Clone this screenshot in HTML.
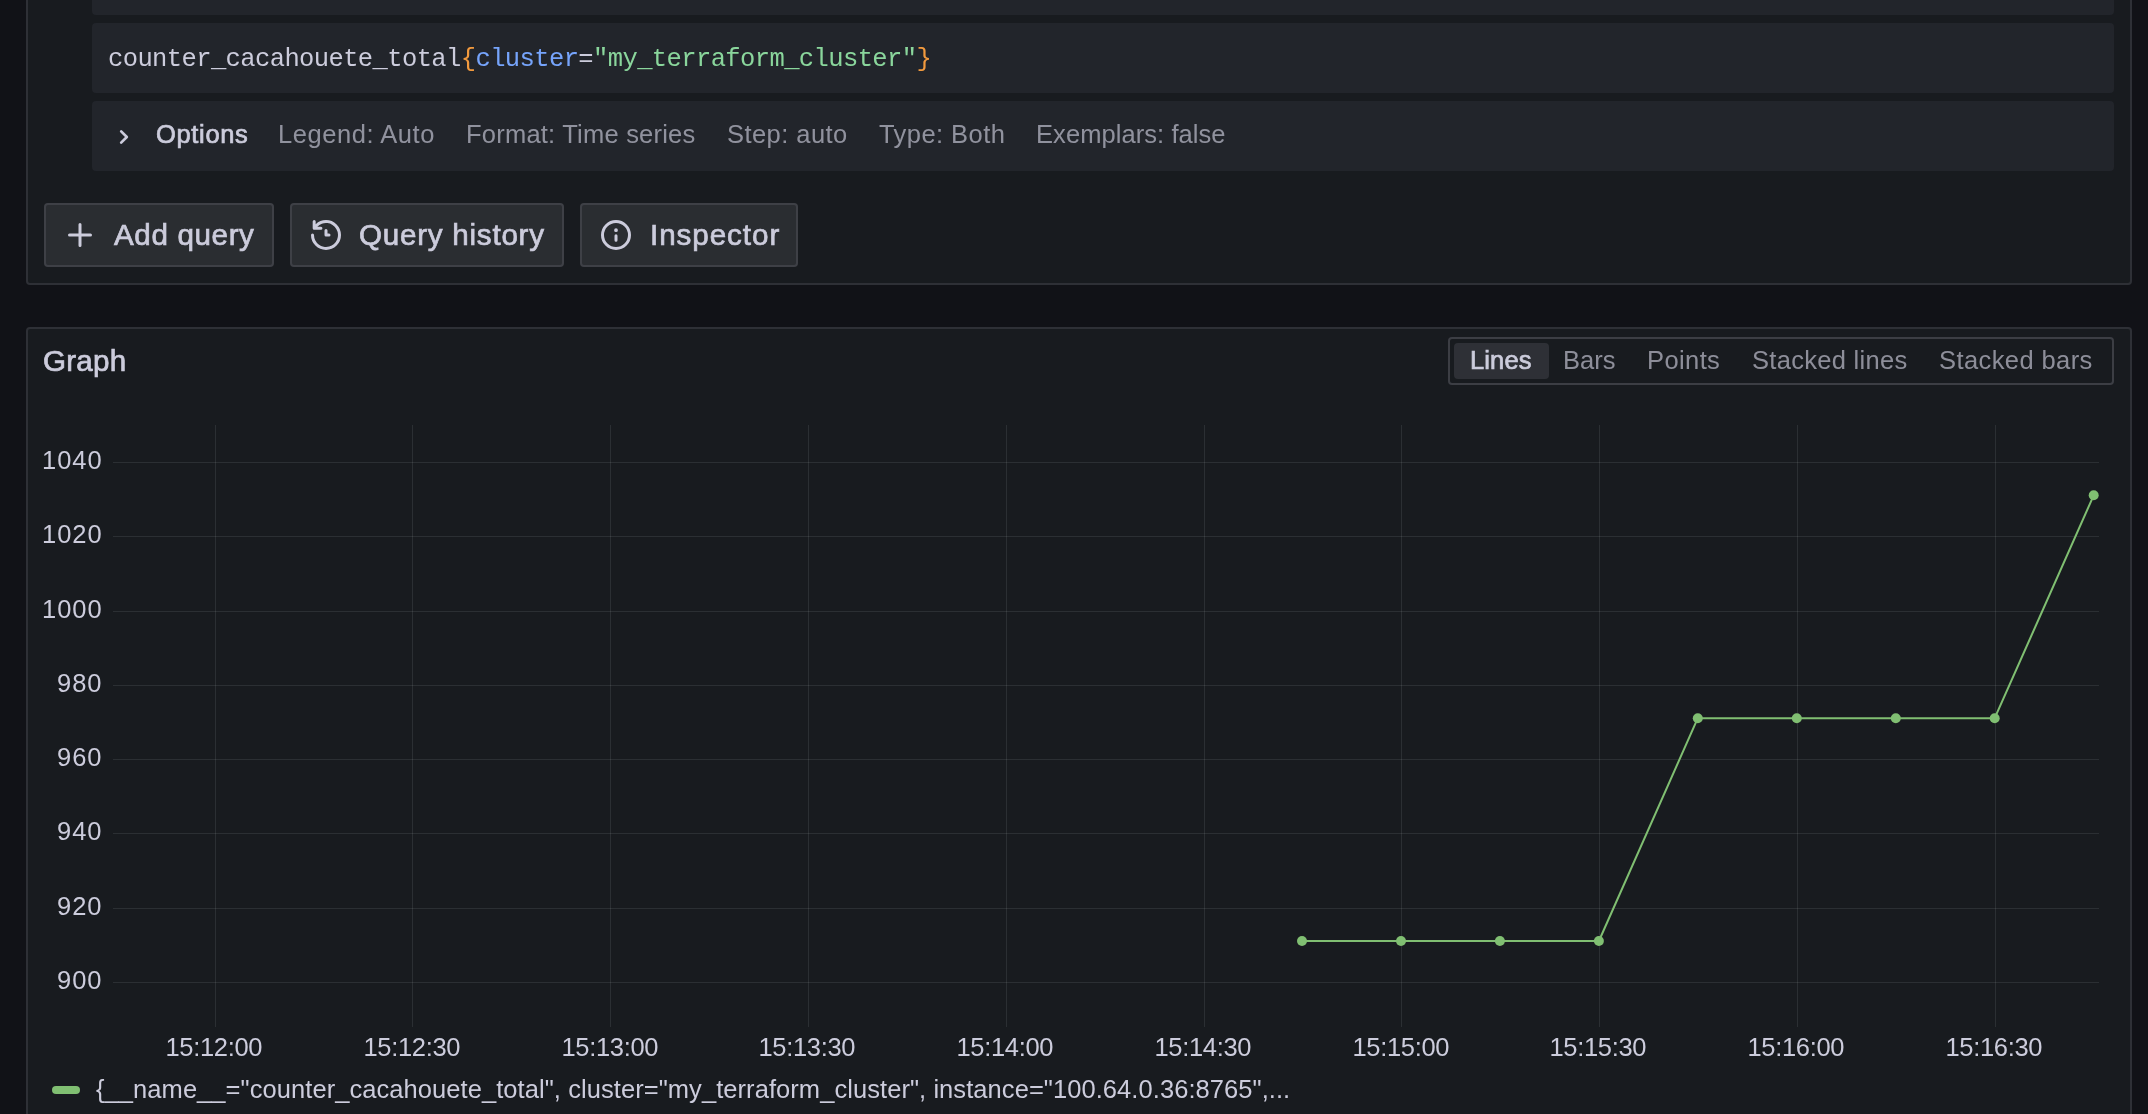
<!DOCTYPE html>
<html><head><meta charset="utf-8">
<style>
html,body{margin:0;padding:0;}
body{width:2148px;height:1114px;overflow:hidden;background:#111217;position:relative;font-family:"Liberation Sans",sans-serif;color:#ccccdc;}
.abs{position:absolute;}
.t{position:absolute;white-space:nowrap;will-change:transform;}
.panel{position:absolute;background:#181b1f;border:2px solid rgba(204,204,220,0.12);border-radius:4px;box-sizing:border-box;}
.box{position:absolute;background:#22252b;border-radius:4px;}
.btn{position:absolute;top:203px;height:64px;box-sizing:border-box;background:rgba(204,204,220,0.10);border:2px solid rgba(204,204,220,0.12);border-radius:4px;}
</style></head>
<body>
<div class="panel" style="left:26px;top:-40px;width:2106px;height:325px;"></div>
<div class="box" style="left:92px;top:-20px;width:2022px;height:35px;"></div>
<div class="box" style="left:92px;top:23px;width:2022px;height:70px;"></div>
<div id="code" class="t" style="left:108.10px;top:46.59px;font-size:25.50px;line-height:25.50px;letter-spacing:-0.604px;color:#ccccdc;font-weight:normal;font-family:'Liberation Mono',monospace;">counter_cacahouete_total<span style="color:#f29a3e">{</span><span style="color:#76a4fb">cluster</span>=<span style="color:#8ad69c">"my_terraform_cluster"</span><span style="color:#f29a3e">}</span></div>
<div class="box" style="left:92px;top:101px;width:2022px;height:70px;"></div>
<svg class="abs" style="left:108px;top:121px" width="32" height="32" viewBox="0 0 24 24"><path fill="#ccccdc" d="M14.83,11.29,10.590,7.05a1,1,0,0,0-1.42,0,1,1,0,0,0,0,1.41L12.71,12,9.17,15.54a1,1,0,0,0,0,1.41,1,1,0,0,0,.71.29,1,1,0,0,0,.71-.29l4.24-4.24A1,1,0,0,0,14.83,11.29Z"/></svg>
<div id="opt0" class="t" style="left:155.60px;top:122.25px;font-size:25.50px;line-height:25.50px;letter-spacing:0.665px;color:#ccccdc;font-weight:normal;font-family:'Liberation Sans',sans-serif;-webkit-text-stroke:0.7px currentColor;">Options</div>
<div id="opt1" class="t" style="left:278.00px;top:122.25px;font-size:25.50px;line-height:25.50px;letter-spacing:0.548px;color:rgba(204,204,220,0.65);font-weight:normal;font-family:'Liberation Sans',sans-serif;">Legend: Auto</div>
<div id="opt2" class="t" style="left:465.60px;top:122.25px;font-size:25.50px;line-height:25.50px;letter-spacing:0.221px;color:rgba(204,204,220,0.65);font-weight:normal;font-family:'Liberation Sans',sans-serif;">Format: Time series</div>
<div id="opt3" class="t" style="left:726.60px;top:122.25px;font-size:25.50px;line-height:25.50px;letter-spacing:0.439px;color:rgba(204,204,220,0.65);font-weight:normal;font-family:'Liberation Sans',sans-serif;">Step: auto</div>
<div id="opt4" class="t" style="left:879.00px;top:122.25px;font-size:25.50px;line-height:25.50px;letter-spacing:0.444px;color:rgba(204,204,220,0.65);font-weight:normal;font-family:'Liberation Sans',sans-serif;">Type: Both</div>
<div id="opt5" class="t" style="left:1035.60px;top:122.25px;font-size:25.50px;line-height:25.50px;letter-spacing:0.069px;color:rgba(204,204,220,0.65);font-weight:normal;font-family:'Liberation Sans',sans-serif;">Exemplars: false</div>
<div class="btn" style="left:44px;width:230px;"></div>
<svg class="abs" style="left:62px;top:217px" width="36" height="36" viewBox="0 0 24 24"><path fill="#ccccdc" d="M19,11H13V5a1,1,0,0,0-2,0v6H5a1,1,0,0,0,0,2h6v6a1,1,0,0,0,2,0V13h6a1,1,0,0,0,0-2Z"/></svg>
<div id="b1" class="t" style="left:114.00px;top:219.99px;font-size:29.60px;line-height:29.60px;letter-spacing:0.625px;color:#ccccdc;font-weight:normal;font-family:'Liberation Sans',sans-serif;-webkit-text-stroke:0.7px currentColor;">Add query</div>
<div class="btn" style="left:290px;width:274px;"></div>
<svg class="abs" style="left:308px;top:217px" width="36" height="36" viewBox="0 0 24 24"><path fill="#ccccdc" d="M12,2A10,10,0,0,0,5.12,4.77V3a1,1,0,0,0-2,0V7.5a1,1,0,0,0,1,1H8.62a1,1,0,0,0,0-2H6.22A8,8,0,1,1,4,12a1,1,0,0,0-2,0A10,10,0,1,0,12,2Zm0,6a1,1,0,0,0-1,1v3a1,1,0,0,0,1,1h2a1,1,0,0,0,0-2H13V9A1,1,0,0,0,12,8Z"/></svg>
<div id="b2" class="t" style="left:359.40px;top:219.99px;font-size:29.60px;line-height:29.60px;letter-spacing:0.753px;color:#ccccdc;font-weight:normal;font-family:'Liberation Sans',sans-serif;-webkit-text-stroke:0.7px currentColor;">Query history</div>
<div class="btn" style="left:580px;width:218px;"></div>
<svg class="abs" style="left:598px;top:217px" width="36" height="36" viewBox="0 0 24 24"><path fill="#ccccdc" d="M12,2A10,10,0,1,0,22,12,10.01114,10.01114,0,0,0,12,2Zm0,18a8,8,0,1,1,8-8A8.00917,8.00917,0,0,1,12,20Zm0-8.5a1,1,0,0,0-1,1v3a1,1,0,0,0,2,0v-3A1,1,0,0,0,12,11.5Zm0-4a1.25,1.25,0,1,0,1.25,1.25A1.25,1.25,0,0,0,12,7.5Z"/></svg>
<div id="b3" class="t" style="left:649.60px;top:219.99px;font-size:29.60px;line-height:29.60px;letter-spacing:0.945px;color:#ccccdc;font-weight:normal;font-family:'Liberation Sans',sans-serif;-webkit-text-stroke:0.7px currentColor;">Inspector</div>
<div class="panel" style="left:26px;top:327px;width:2106px;height:900px;"></div>
<div id="graph" class="t" style="left:43.20px;top:346.29px;font-size:29.60px;line-height:29.60px;letter-spacing:0.250px;color:#ccccdc;font-weight:normal;font-family:'Liberation Sans',sans-serif;-webkit-text-stroke:0.7px currentColor;">Graph</div>
<div class="abs" style="left:1448px;top:337px;width:666px;height:48px;box-sizing:border-box;border:2px solid rgba(204,204,220,0.20);border-radius:4px;"></div>
<div class="abs" style="left:1454px;top:343px;width:95px;height:36px;background:rgba(204,204,220,0.12);border-radius:4px;"></div>
<div id="tg0" class="t" style="left:1470.40px;top:347.85px;font-size:25.50px;line-height:25.50px;letter-spacing:0.125px;color:#ccccdc;font-weight:normal;font-family:'Liberation Sans',sans-serif;-webkit-text-stroke:0.7px currentColor;">Lines</div>
<div id="tg1" class="t" style="left:1563.20px;top:347.85px;font-size:25.50px;line-height:25.50px;letter-spacing:0.001px;color:rgba(204,204,220,0.65);font-weight:normal;font-family:'Liberation Sans',sans-serif;">Bars</div>
<div id="tg2" class="t" style="left:1647.00px;top:347.85px;font-size:25.50px;line-height:25.50px;letter-spacing:0.400px;color:rgba(204,204,220,0.65);font-weight:normal;font-family:'Liberation Sans',sans-serif;">Points</div>
<div id="tg3" class="t" style="left:1751.60px;top:347.85px;font-size:25.50px;line-height:25.50px;letter-spacing:0.292px;color:rgba(204,204,220,0.65);font-weight:normal;font-family:'Liberation Sans',sans-serif;">Stacked lines</div>
<div id="tg4" class="t" style="left:1938.60px;top:347.85px;font-size:25.50px;line-height:25.50px;letter-spacing:0.413px;color:rgba(204,204,220,0.65);font-weight:normal;font-family:'Liberation Sans',sans-serif;">Stacked bars</div>
<svg class="abs" style="left:0;top:0" width="2148" height="1114"><g fill="rgba(240,250,255,0.09)">
<rect x="113" y="462" width="1986" height="1"/>
<rect x="113" y="536" width="1986" height="1"/>
<rect x="113" y="611" width="1986" height="1"/>
<rect x="113" y="685" width="1986" height="1"/>
<rect x="113" y="759" width="1986" height="1"/>
<rect x="113" y="833" width="1986" height="1"/>
<rect x="113" y="908" width="1986" height="1"/>
<rect x="113" y="982" width="1986" height="1"/>
<rect x="215" y="425" width="1" height="602"/>
<rect x="412" y="425" width="1" height="602"/>
<rect x="610" y="425" width="1" height="602"/>
<rect x="808" y="425" width="1" height="602"/>
<rect x="1006" y="425" width="1" height="602"/>
<rect x="1204" y="425" width="1" height="602"/>
<rect x="1401" y="425" width="1" height="602"/>
<rect x="1599" y="425" width="1" height="602"/>
<rect x="1797" y="425" width="1" height="602"/>
<rect x="1995" y="425" width="1" height="602"/>
</g>
<polyline fill="none" stroke="#80bf72" stroke-width="2" stroke-linejoin="round" points="1302.0,941.0 1401.0,941.0 1499.9,941.0 1598.9,941.0 1697.8,718.2 1796.8,718.2 1895.8,718.2 1994.7,718.2 2093.7,495.3"/>
<g fill="#80bf72"><circle cx="1302.0" cy="941.0" r="5"/><circle cx="1401.0" cy="941.0" r="5"/><circle cx="1499.9" cy="941.0" r="5"/><circle cx="1598.9" cy="941.0" r="5"/><circle cx="1697.8" cy="718.2" r="5"/><circle cx="1796.8" cy="718.2" r="5"/><circle cx="1895.8" cy="718.2" r="5"/><circle cx="1994.7" cy="718.2" r="5"/><circle cx="2093.7" cy="495.3" r="5"/></g></svg>
<div id="y0" class="t" style="right:2045.40px;top:447.95px;font-size:25.50px;line-height:25.50px;letter-spacing:1.003px;text-align:right;">1040</div>
<div id="y1" class="t" style="right:2045.40px;top:522.24px;font-size:25.50px;line-height:25.50px;letter-spacing:1.003px;text-align:right;">1020</div>
<div id="y2" class="t" style="right:2045.40px;top:596.52px;font-size:25.50px;line-height:25.50px;letter-spacing:1.003px;text-align:right;">1000</div>
<div id="y3" class="t" style="right:2045.40px;top:670.81px;font-size:25.50px;line-height:25.50px;letter-spacing:1.003px;text-align:right;">980</div>
<div id="y4" class="t" style="right:2045.40px;top:745.10px;font-size:25.50px;line-height:25.50px;letter-spacing:1.003px;text-align:right;">960</div>
<div id="y5" class="t" style="right:2045.40px;top:819.38px;font-size:25.50px;line-height:25.50px;letter-spacing:1.003px;text-align:right;">940</div>
<div id="y6" class="t" style="right:2045.40px;top:893.67px;font-size:25.50px;line-height:25.50px;letter-spacing:1.003px;text-align:right;">920</div>
<div id="y7" class="t" style="right:2045.40px;top:967.95px;font-size:25.50px;line-height:25.50px;letter-spacing:1.003px;text-align:right;">900</div>
<div id="x0" class="t" style="left:119.20px;width:190px;text-align:center;top:1034.65px;font-size:25.50px;line-height:25.50px;letter-spacing:-0.316px;text-indent:-0.316px;">15:12:00</div>
<div id="x1" class="t" style="left:316.95px;width:190px;text-align:center;top:1034.65px;font-size:25.50px;line-height:25.50px;letter-spacing:-0.316px;text-indent:-0.316px;">15:12:30</div>
<div id="x2" class="t" style="left:514.70px;width:190px;text-align:center;top:1034.65px;font-size:25.50px;line-height:25.50px;letter-spacing:-0.316px;text-indent:-0.316px;">15:13:00</div>
<div id="x3" class="t" style="left:712.45px;width:190px;text-align:center;top:1034.65px;font-size:25.50px;line-height:25.50px;letter-spacing:-0.316px;text-indent:-0.316px;">15:13:30</div>
<div id="x4" class="t" style="left:910.20px;width:190px;text-align:center;top:1034.65px;font-size:25.50px;line-height:25.50px;letter-spacing:-0.316px;text-indent:-0.316px;">15:14:00</div>
<div id="x5" class="t" style="left:1107.95px;width:190px;text-align:center;top:1034.65px;font-size:25.50px;line-height:25.50px;letter-spacing:-0.316px;text-indent:-0.316px;">15:14:30</div>
<div id="x6" class="t" style="left:1305.70px;width:190px;text-align:center;top:1034.65px;font-size:25.50px;line-height:25.50px;letter-spacing:-0.316px;text-indent:-0.316px;">15:15:00</div>
<div id="x7" class="t" style="left:1503.45px;width:190px;text-align:center;top:1034.65px;font-size:25.50px;line-height:25.50px;letter-spacing:-0.316px;text-indent:-0.316px;">15:15:30</div>
<div id="x8" class="t" style="left:1701.20px;width:190px;text-align:center;top:1034.65px;font-size:25.50px;line-height:25.50px;letter-spacing:-0.316px;text-indent:-0.316px;">15:16:00</div>
<div id="x9" class="t" style="left:1898.95px;width:190px;text-align:center;top:1034.65px;font-size:25.50px;line-height:25.50px;letter-spacing:-0.316px;text-indent:-0.316px;">15:16:30</div>
<div class="abs" style="left:52px;top:1086px;width:28px;height:8px;border-radius:4px;background:#80bf72;"></div>
<div id="legend" class="t" style="left:96.00px;top:1077.35px;font-size:25.50px;line-height:25.50px;letter-spacing:0.065px;color:#ccccdc;font-weight:normal;font-family:'Liberation Sans',sans-serif;">{__name__="counter_cacahouete_total", cluster="my_terraform_cluster", instance="100.64.0.36:8765",...</div>
</body></html>
